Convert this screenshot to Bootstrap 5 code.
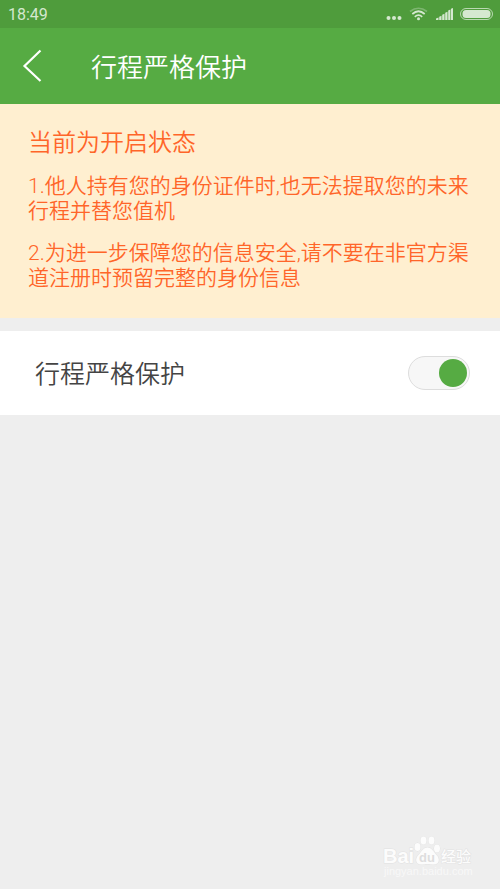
<!DOCTYPE html>
<html lang="zh-CN">
<head>
<meta charset="utf-8">
<meta name="viewport" content="width=device-width, initial-scale=1">
<title>行程严格保护</title>
<link rel="stylesheet" href="https://cdn.jsdelivr.net/npm/bootstrap@5.3.0/dist/css/bootstrap.min.css">
<style>
  body { background: #eee; font-family: Roboto, "Noto Sans CJK SC", sans-serif; }
  .status-bar { background: #4f9c3c; color: #d5e8d0; height: 28px; font-size: 16px; line-height: 30px; }
  .app-bar { background: #56ab43; height: 76px; }
  .back-btn { width: 64px; height: 76px; }
  .app-title { font-size: 26px; line-height: 40px; padding: 4px 0 0 27px; font-weight: 350; }
  .notice { background: #ffefd0; color: #ff6529; padding: 21px 28px 27px; font-size: 21px; line-height: 25px; font-weight: 350; }
  .notice-title { font-size: 24px; line-height: 36px; margin-bottom: 13px; font-weight: 350; }
  .notice p { margin-bottom: 17px; }
  .setting { height: 84px; margin-top: 13px; padding: 0 30px 0 35px; color: #444; }
  .setting label { font-size: 25px; line-height: 40px; padding-top: 4px; font-weight: 350; }
  .setting .form-check-input {
    width: 62px; height: 34px; background-color: #f7f7f7; border-color: #ddd;
    background-size: 34px 34px;
    background-image: url("data:image/svg+xml,%3csvg xmlns='http://www.w3.org/2000/svg' viewBox='0 0 34 34'%3e%3ccircle cx='18' cy='17' r='14' fill='%23bbb'/%3e%3c/svg%3e");
  }
  .setting .form-check-input:checked {
    background-image: url("data:image/svg+xml,%3csvg xmlns='http://www.w3.org/2000/svg' viewBox='0 0 34 34'%3e%3ccircle cx='18' cy='17' r='14' fill='%2356ab43'/%3e%3c/svg%3e");
  }
  .brand-foot { padding: 0 26px 8px; }
</style>
<script src="https://cdn.jsdelivr.net/npm/bootstrap@5.3.0/dist/js/bootstrap.bundle.min.js"></script>
</head>
<body class="d-flex flex-column min-vh-100">
<header>
  <div class="status-bar d-flex justify-content-between ps-2">
    <span>18:49</span>
    <svg width="116" height="28" viewBox="384 0 116 28" fill="#d5e8d0" aria-hidden="true">
      <circle cx="388.5" cy="18" r="2"/><circle cx="394" cy="18" r="2"/><circle cx="399.500" cy="18" r="2"/>
      <g fill="none" stroke="#d5e8d0" stroke-width="1.7">
        <path d="M410 11.500Q418.500 5 427 11.500" opacity=".35"/>
        <path d="M412.300 14Q418.500 8.500 424.700 14"/>
        <path d="M414.800 16.800Q418.500 13.500 422.200 16.800"/>
      </g>
      <circle cx="418.500" cy="18.700" r="1.500"/>
      <path d="M436 18.500l2.500-1V20H436zM439.200 16.800l2.300-1V20h-2.300zM442.200 14.800l2.300-1V20h-2.300zM445.200 12.800l2.300-1V20h-2.300zM448.200 10.500l2.200-1V20h-2.200zM451 8.800l2-.8V20h-2z"/>
      <rect x="460.500" y="8.500" width="32" height="11" rx="5.500" fill="none" stroke="#d5e8d0" stroke-opacity=".8"/>
      <rect x="462.500" y="10" width="28" height="8" rx="3.500"/>
    </svg>
  </div>
  <nav class="app-bar d-flex align-items-center text-white" aria-label="页面导航">
    <button type="button" class="back-btn btn border-0 p-0" aria-label="返回">
      <svg class="d-block" width="64" height="76" viewBox="0 28 64 76" fill="none" stroke="#fff" stroke-width="2.200"><path d="M40.500 50.500L24.500 66L40.500 81"/></svg>
    </button>
    <h1 class="app-title mb-0">行程严格保护</h1>
  </nav>
</header>
<main>
  <section class="notice">
    <h2 class="notice-title">当前为开启状态</h2>
    <p>1.他人持有您的身份证件时,也无法提取您的未来行程并替您值机</p>
    <p class="mb-0">2.为进一步保障您的信息安全,请不要在非官方渠道注册时预留完整的身份信息</p>
  </section>
  <section class="setting bg-white d-flex align-items-center justify-content-between">
    <label for="protect">行程严格保护</label>
    <div class="form-check form-switch p-0 m-0 d-flex">
      <input class="form-check-input m-0 shadow-none" type="checkbox" role="switch" id="protect" checked>
    </div>
  </section>
</main>
<footer class="brand-foot mt-auto d-flex justify-content-end">
  <svg width="92" height="46" viewBox="382 835 92 46" fill="#fcfcfc" stroke="#e2e2e2" stroke-width="1" paint-order="stroke" role="img" aria-label="Baidu 经验">
    <text x="383" y="863" font-family="Liberation Sans, sans-serif" font-weight="700" font-size="20">Bai</text>
    <ellipse cx="417.500" cy="847" rx="3" ry="4"/><ellipse cx="423.500" cy="840.500" rx="3" ry="4"/>
    <ellipse cx="431.500" cy="840.500" rx="3" ry="4"/><ellipse cx="437" cy="848.500" rx="3" ry="4"/>
    <path d="M427.500 847.500c-4.500 0-5.500 4-9 7.500c-4 4-2.500 9.500 2.500 9.500c3 0 4-.5 6.500-.5s3.500.5 6.500.5c5 0 6.500-5.500 2.500-9.500c-3.500-3.500-4.500-7.500-9-7.500z"/>
    <text x="419" y="862" font-family="Liberation Sans, sans-serif" font-weight="700" font-size="13" fill="#dedede" stroke="none">du</text>
    <text x="441" y="862" font-family="Noto Sans CJK SC, sans-serif" font-weight="500" font-size="15">经验</text>
    <text x="384" y="875" font-family="Liberation Sans, sans-serif" font-size="11" fill="#f8f8f8" stroke="none">jingyan.baidu.com</text>
  </svg>
</footer>
</body>
</html>
